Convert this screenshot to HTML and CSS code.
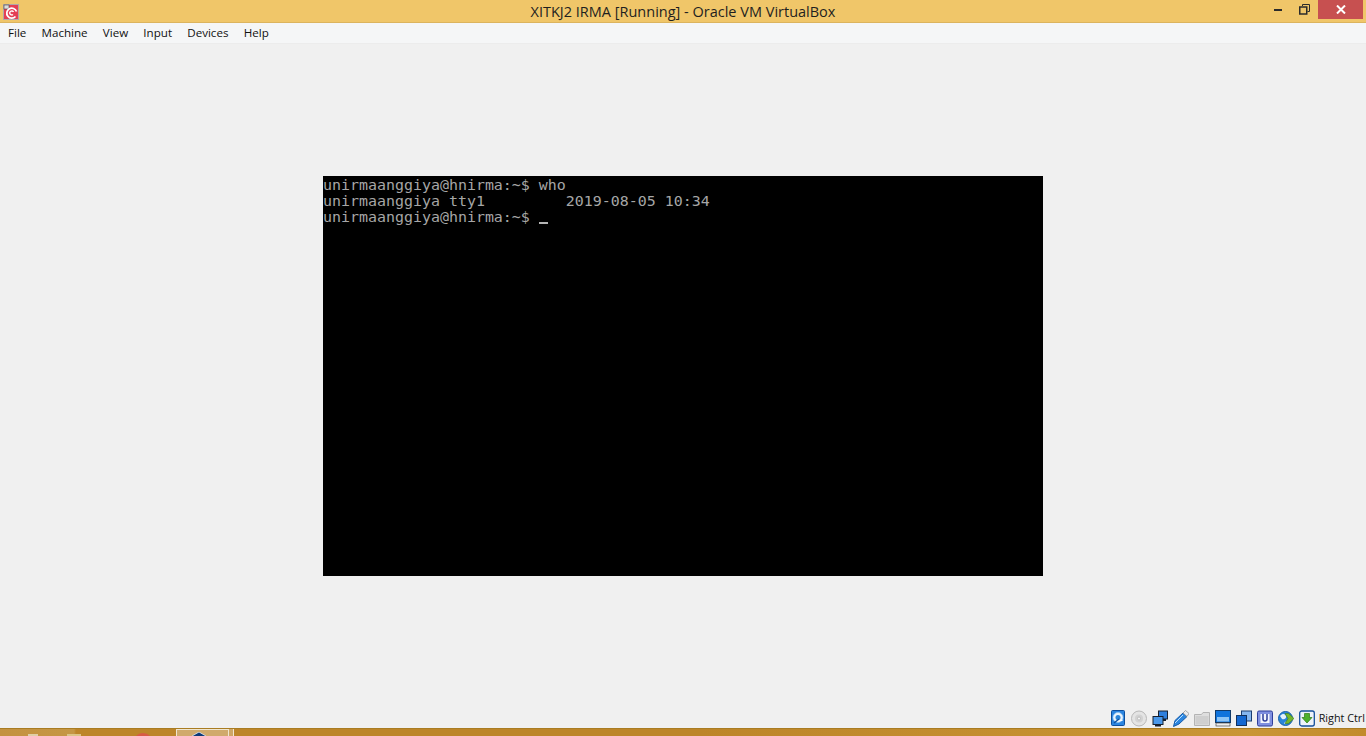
FILE: index.html
```html
<!DOCTYPE html>
<html lang="en">
<head>
<meta charset="utf-8">
<title>XITKJ2 IRMA [Running] - Oracle VM VirtualBox</title>
<link rel="stylesheet" href="styles.css">
</head>
<body>
<div class="window">
  <header class="titlebar">
    <svg class="app-icon" width="16" height="16" viewBox="0 0 16 16">
      <rect x=".5" y=".5" width="15" height="15" fill="#e43f55" stroke="#b0a8a8"/>
      <rect x="1" y="1" width="5" height="4" fill="#dcdcdc" stroke="#444" stroke-width=".6"/>
      <path d="M12.500 12.500A5 5 0 1 1 13.500 7.500" fill="none" stroke="#fff" stroke-width="1.800"/>
      <path d="M10 10.500A2 2 0 1 1 10.500 8" fill="none" stroke="#fff" stroke-width="1.400"/>
    </svg>
    <div class="title">XITKJ2 IRMA [Running] - Oracle VM VirtualBox</div>
    <div class="controls">
      <div class="ctl">
        <svg width="8" height="3" viewBox="0 0 8 3"><rect width="8" height="2" y="1" fill="#2b2b2b"/></svg>
      </div>
      <div class="ctl">
        <svg width="11" height="11" viewBox="0 0 11 11"><path d="M3.500 2V.5h7v7H8.500" fill="none" stroke="#2b2b2b"/><rect x=".75" y="3" width="7" height="7" fill="none" stroke="#2b2b2b" stroke-width="1.500"/></svg>
      </div>
      <div class="ctl ctl-close">
        <svg width="10" height="9" viewBox="0 0 10 9"><path d="M1 .5l8 8M9 .5l-8 8" stroke="#fff" stroke-width="2"/></svg>
      </div>
    </div>
  </header>

  <nav class="menubar">
    <span class="menu-item">File</span>
    <span class="menu-item">Machine</span>
    <span class="menu-item">View</span>
    <span class="menu-item">Input</span>
    <span class="menu-item">Devices</span>
    <span class="menu-item">Help</span>
  </nav>

  <main class="stage">
    <pre class="terminal">unirmaanggiya@hnirma:~$ who
unirmaanggiya tty1         2019-08-05 10:34
unirmaanggiya@hnirma:~$ <span class="cursor"></span></pre>
  </main>

  <footer class="statusbar">
    <svg class="st-icon" width="16" height="17" viewBox="0 0 16 17"><rect x="1.500" y=".5" width="13" height="15" rx="1" fill="#2b85e0" stroke="#0d4f9e"/><circle cx="8" cy="7.500" r="5" fill="#e8f3fc" stroke="#9ccbf2" stroke-width=".6"/><circle cx="8" cy="7.500" r="2.500" fill="#2a84d8"/><path d="M4 13l5-4" stroke="#0d4f9e" stroke-width="1.400"/><path d="M9.500 10.500h3" stroke="#fff"/></svg>
    <svg class="st-icon" width="16" height="17" viewBox="0 0 16 17"><circle cx="8" cy="8.500" r="7.500" fill="#e4e4e4" stroke="#b8b8b8"/><circle cx="8" cy="8.500" r="4" fill="#d2d2d2"/><circle cx="8" cy="8.500" r="1.500" fill="#f6f6f6" stroke="#a8a8a8" stroke-width=".6"/></svg>
    <svg class="st-icon" width="16" height="17" viewBox="0 0 16 17"><rect x="6.500" y="1" width="9" height="8" fill="#2f7fdc" stroke="#17202e"/><rect x="1" y="6.500" width="10" height="8" fill="#4a98ea" stroke="#17202e"/><rect x="3" y="14.500" width="6" height="2" fill="#17202e"/><rect x="11" y="9" width="3" height="2" fill="#17202e"/></svg>
    <svg class="st-icon" width="16" height="17" viewBox="0 0 16 17"><path d="M.5 16.500l1.500-6L10 3l4 3.500L6 14z" fill="#2b86e0" stroke="#155aa8"/><path d="M2 13l8-8" stroke="#bfe0fa"/><path d="M10 3l2.500-2.500 3.500 3L14 6.500z" fill="#ececec" stroke="#8a8a8a" stroke-width=".7"/></svg>
    <svg class="st-icon" width="16" height="17" viewBox="0 0 16 17"><path d="M.5 15.500V4.500h7L9 2.500h6.500v13z" fill="#dedede" stroke="#b4b4b4"/><rect x="1.500" y="6" width="13" height="8.500" fill="#cfcfcf"/></svg>
    <svg class="st-icon" width="16" height="17" viewBox="0 0 16 17"><rect x=".5" y=".5" width="15" height="12" fill="#0f73dc" stroke="#123a68"/><rect x="2" y="7" width="12" height="4.500" fill="#8cc4f6"/><rect x="1" y="13" width="14" height="3" fill="#ededed" stroke="#333" stroke-width=".6"/></svg>
    <svg class="st-icon" width="16" height="17" viewBox="0 0 16 17"><rect x="5.500" y="1" width="10" height="10" fill="#86b6ef" stroke="#1a3d70"/><rect x=".5" y="5.500" width="10" height="10" fill="#1468d2" stroke="#12305c"/></svg>
    <svg class="st-icon" width="16" height="17" viewBox="0 0 16 17"><rect x=".5" y="1" width="15" height="15" rx="1.500" fill="#7f8fe0" stroke="#2f3f9c"/><rect x="3.500" y="4" width="9" height="9" fill="#f2f4fc"/><path d="M6 4v5a2 2 0 0 0 4 0V4" fill="none" stroke="#2f3f9c" stroke-width="1.500"/></svg>
    <svg class="st-icon" width="16" height="17" viewBox="0 0 16 17"><circle cx="7.500" cy="8.500" r="7" fill="#2a84d8" stroke="#175ea8"/><path d="M2 6c3-3 5-2 6 0s-2 4-4 3zM6 14c1-3 3-3 4-1z" fill="#e4f0fa"/><path d="M7 3.500h3.500l5.500 5-5.500 5H7l3-5z" fill="#74b52c" stroke="#3f7a14" stroke-width=".6"/></svg>
    <svg class="st-icon" width="16" height="17" viewBox="0 0 16 17"><rect x=".7" y="1" width="14.600" height="15" rx="2" fill="#eef3fa" stroke="#16509c" stroke-width="1.300"/><path d="M5.500 3.500h5v4H13l-5 5.500L3 7.500h2.500z" fill="#4eb02c" stroke="#2c7a12" stroke-width=".7"/></svg>
    <span class="hostkey">Right Ctrl</span>
  </footer>

  <div class="taskbar">
    <span class="tb-chip tb-chip-a"></span>
    <span class="tb-chip tb-chip-b"></span>
    <span class="tb-dot"></span>
    <div class="tb-button">
      <svg class="tb-glyph" width="18" height="8" viewBox="0 0 18 8"><path d="M9 0l7 4v4H2V4z" fill="#0d3a78" stroke="#e8eef4" stroke-width=".8"/></svg>
    </div>
    <span class="tb-tail"></span>
  </div>
</div>
</body>
</html>
```

FILE: styles.css
```css
* { box-sizing: border-box; }

html, body {
  margin: 0;
  height: 100%;
  overflow: hidden;
}

body {
  font-family: "Open Sans", "Liberation Sans", sans-serif;
  background: #f0f0f0;
}

.window {
  display: flex;
  flex-direction: column;
  height: 736px;
  width: 1366px;
}

.titlebar {
  display: flex;
  align-items: center;
  height: 23px;
  flex: none;
  background: #f0c669;
  border-bottom: 1px solid #dcb45e;
  padding-left: 3px;
}

.app-icon { flex: none; margin-top: 1px; }

.title {
  flex: 1;
  text-align: center;
  font-size: 14.5px;
  color: #1f1f1f;
  padding-left: 82px;
  white-space: nowrap;
}

.controls {
  display: flex;
  align-self: flex-start;
  flex: none;
  margin-right: 3px;
}

.ctl {
  display: flex;
  align-items: center;
  justify-content: center;
  width: 26px;
  height: 19px;
}

.ctl-close {
  width: 45px;
  background: #c75050;
  margin-left: 1px;
}

.menubar {
  display: flex;
  align-items: center;
  gap: 15.2px;
  flex: none;
  height: 21px;
  padding: 0 8px 2px;
  background: #f5f6f7;
  border-bottom: 1px solid #ececec;
  font-size: 11.6px;
  color: #111;
}

.stage {
  flex: 1;
  display: flex;
  align-items: center;
  justify-content: center;
}

.terminal {
  width: 720px;
  height: 400px;
  margin: 0;
  padding-top: 1px;
  background: #000;
  color: #a6a6a6;
  font-family: "DejaVu Sans Mono", "Liberation Mono", monospace;
  font-size: 14.95px;
  line-height: 16px;
  white-space: pre;
}

.cursor {
  display: inline-block;
  width: 9px;
  height: 2px;
  background: #b4b4b4;
  vertical-align: -2px;
}

.statusbar {
  display: flex;
  align-items: center;
  justify-content: flex-end;
  gap: 5px;
  flex: none;
  height: 20px;
  padding-right: 1px;
  color: #111;
  font-size: 10.8px;
}

.st-icon { flex: none; }

.hostkey {
  margin-left: -1px;
  margin-bottom: 2px;
  white-space: nowrap;
}

.taskbar {
  display: flex;
  align-items: flex-start;
  flex: none;
  height: 8px;
  overflow: hidden;
  border-top: 1px solid #a97c22;
  background: linear-gradient(90deg, #c49240 0, #c59745 74px, #bd8529 76px, #bd8529 700px, #c99636 1250px, #c28b2d 1366px);
}

.tb-chip {
  flex: none;
  height: 4px;
  margin-top: 5px;
}

.tb-chip-a {
  width: 10px;
  margin-left: 28px;
  background: #e0cfa8;
}

.tb-chip-b {
  width: 14px;
  margin-left: 29px;
  background: #dcc487;
}

.tb-dot {
  width: 20px;
  height: 20px;
  flex: none;
  margin-left: 52px;
  margin-top: 4px;
  border-radius: 50%;
  background: #d85a45;
}

.tb-button {
  display: flex;
  align-items: flex-start;
  flex: none;
  width: 53px;
  height: 7px;
  margin-left: 23px;
  padding-left: 13px;
  overflow: hidden;
  background: #d0aa6c;
  border: 1px solid #f0e6d0;
  border-bottom: 0;
}

.tb-glyph {
  flex: none;
  margin-top: 2px;
}

.tb-tail {
  width: 5px;
  height: 7px;
  flex: none;
  background: #cfa766;
  border-right: 1px solid #f0e6d0;
}
```
